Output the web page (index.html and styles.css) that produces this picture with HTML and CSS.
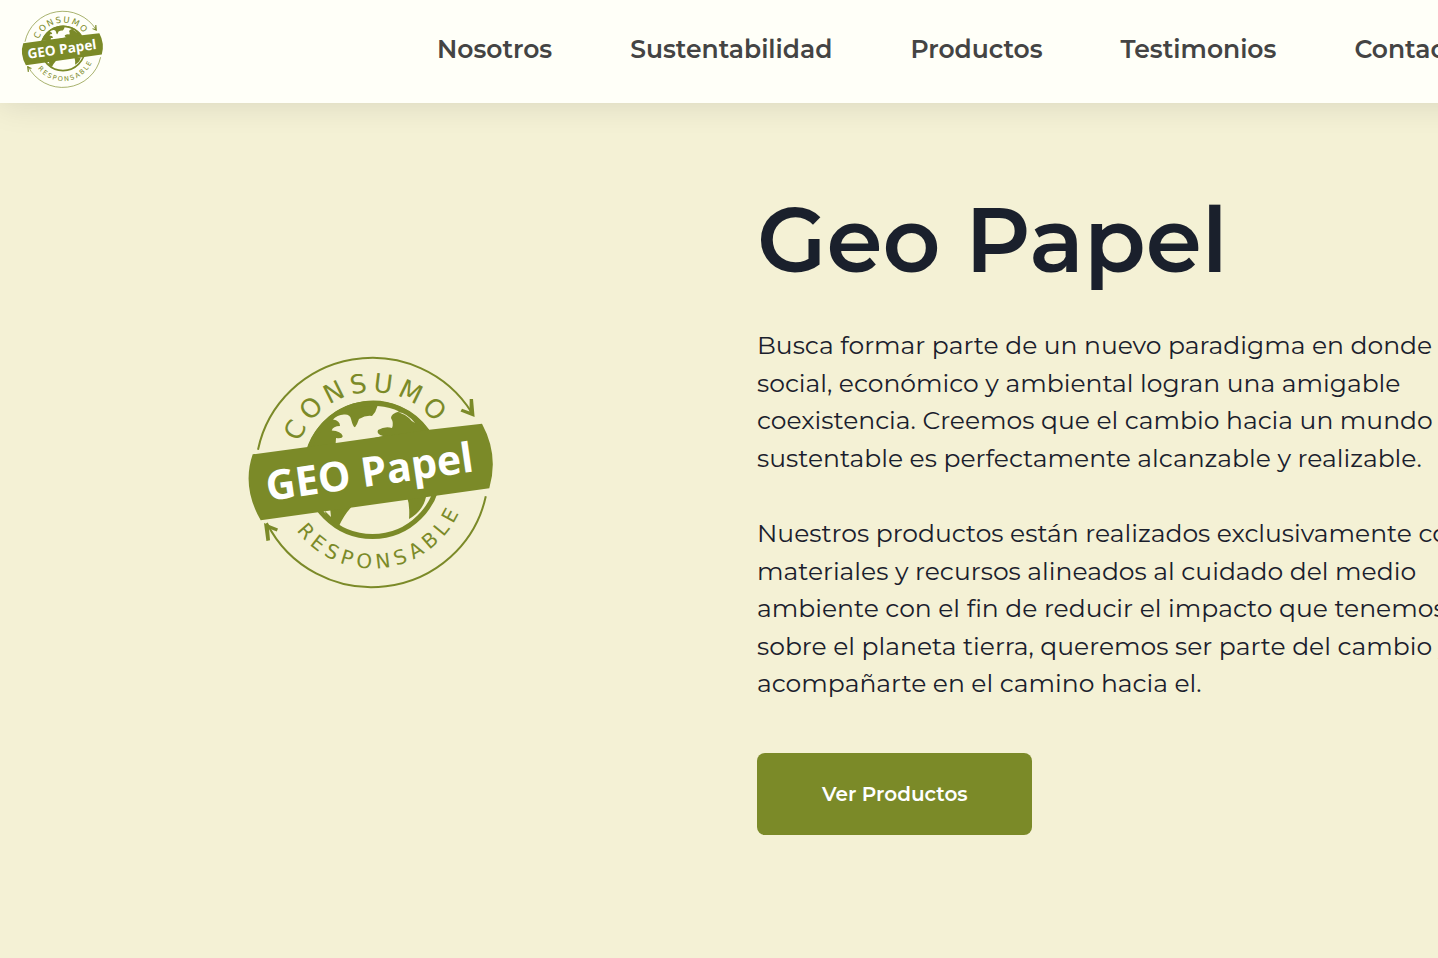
FILE: index.html
```html
<!DOCTYPE html>
<html lang="es">
<head>
<meta charset="utf-8">
<meta name="viewport" content="width=device-width, initial-scale=1">
<title>Geo Papel</title>
<link rel="stylesheet" href="styles.css">
</head>
<body>
<header class="header">
  <a class="brand" href="#inicio" aria-label="Geo Papel">
    <svg class="brand-logo" viewBox="0 0 244 232" aria-hidden="true"><use href="#logo"/></svg>
  </a>
  <nav class="nav">
    <a href="#nosotros">Nosotros</a>
    <a href="#sustentabilidad">Sustentabilidad</a>
    <a href="#productos">Productos</a>
    <a href="#testimonios">Testimonios</a>
    <a href="#contacto">Contacto</a>
  </nav>
</header>
<main class="hero" id="inicio">
  <div class="hero-art">
    <svg class="hero-logo" viewBox="0 0 244 232" role="img" aria-label="Geo Papel, consumo responsable">
      <defs>
        <path id="arc-top" d="M45 113.500A78.500 78.500 0 0 1 202 113.500"/>
        <path id="arc-bottom" d="M28.500 116.500A95 95 0 0 0 218.500 116.500"/>
        <clipPath id="globe-clip"><circle cx="123.5" cy="113" r="65"/></clipPath>
      </defs>
      <g id="logo">
        <g class="logo-line">
          <path d="M9 92.700A116.800 115.300 0 0 1 223 56"/>
          <path d="M236.800 139.300A116.800 115 0 0 1 17.800 166"/>
        </g>
        <g class="logo-fill">
          <path d="M211.500 54.500L213 51.800L220.500 54.500L220.700 42L224 42L225.600 60Z"/>
          <path d="M29 171.500L27.800 174.500L20 171.500L21 183.300L17.400 184L15 166Z"/>
          <path d="M58.700 90A69 69 0 0 1 180.300 72.700L150 90Z"/>
        </g>
        <circle class="logo-ring" cx="123.5" cy="113" r="66.5"/>
        <path class="logo-land" d="M86.700 86L87 81Q93.500 82 93.700 79Q92 74 82.700 73.500Q84 69 91 69Q91 63.500 84 62.500Q88 58 95 57.500Q101 57 102 62Q104 70 106 70.300Q108 68 110 62Q117 58 123 59Q127 55 128.500 49Q142 50 150 54.600Q142 57 142 61Q145 66 143 71Q136 69 129 73Q127 77 134 79L86 90Z"/>
        <path class="logo-land" d="M149 55Q158 56 166 66Q163 65 160 61Q155 57 149 55Z"/>
        <g class="logo-fill" clip-path="url(#globe-clip)">
          <path d="M81 150L82 160L76 154L78 168L90 169Q95 158 102 150.500L102 148Z"/>
          <path d="M158 140Q161 148 160 162Q174 154 177 140Z"/>
        </g>
        <path class="logo-fill" d="M3.700 97.300L58.700 90L180.300 72.700L233 66.700Q250 98 240.300 131.300L11.700 163.300Q-7.500 130 3.700 97.300Z"/>
        <text class="logo-name" x="19" y="144" transform="rotate(-8.200 19 144)">GEO Papel</text>
        <text class="logo-top" dx="0 5 5 5 5 5 5"><textPath href="#arc-top" startOffset="112">CONSUMO</textPath></text>
        <text class="logo-bottom" dx="0 5 5 5 5 5 5 5 5 5 5"><textPath href="#arc-bottom" startOffset="159">RESPONSABLE</textPath></text>
      </g>
    </svg>
  </div>
  <div class="hero-copy">
    <h1>Geo Papel</h1>
    <p>Busca formar parte de un nuevo paradigma en donde lo<br>
      social, económico y ambiental logran una amigable<br>
      coexistencia. Creemos que el cambio hacia un mundo<br>
      sustentable es perfectamente alcanzable y realizable.</p>
    <p>Nuestros productos están realizados exclusivamente con<br>
      materiales y recursos alineados al cuidado del medio<br>
      ambiente con el fin de reducir el impacto que tenemos<br>
      sobre el planeta tierra, queremos ser parte del cambio y<br>
      acompañarte en el camino hacia el.</p>
    <a class="button" href="#productos">Ver Productos</a>
  </div>
</main>
</body>
</html>
```
FILE: styles.css
```css
*, *::before, *::after {
  box-sizing: border-box;
}

body {
  --paper: #f4f1d5;
  margin: 0;
  min-height: 100vh;
  overflow-x: hidden;
  background: var(--paper);
  color: #1a202c;
  font-family: Montserrat, Inter, sans-serif;
}

a {
  color: inherit;
  text-decoration: none;
}

.header {
  --paper: #fffff8;
  position: relative;
  display: flex;
  align-items: center;
  gap: 334px;
  min-width: max-content;
  padding: 11px 22px 15px;
  background: var(--paper);
  box-shadow: 0 0 32px rgba(0, 0, 0, 0.12);
}

.brand,
.nav {
  flex: none;
}

.brand-logo {
  display: block;
  width: 81px;
  height: 77px;
  overflow: visible;
}

.nav {
  display: flex;
  gap: 78px;
  padding-bottom: 2px;
  color: #444;
  font-size: 25px;
  font-weight: 600;
  line-height: 32px;
}

.hero {
  display: grid;
  grid-template-columns: 742fr 696fr;
  align-items: center;
  padding: 8px 0 123px;
}

.hero-art {
  display: flex;
  justify-content: center;
}

.hero-logo {
  width: 244px;
  height: 232px;
  overflow: visible;
}

.hero-copy {
  min-width: 0;
  padding: 74px 0 0 15px;
  white-space: nowrap;
}

h1 {
  margin: 0 0 32px;
  font-size: 90px;
  font-weight: 600;
  line-height: 110px;
}

p {
  margin: 0 0 38px;
  font-size: 25px;
  font-weight: 400;
  line-height: 1.5;
}

.button {
  display: inline-block;
  margin-top: 12px;
  padding: 25px 64px 25px 65px;
  border-radius: 8px;
  background: #7b8a28;
  color: #fff;
  font-size: 20px;
  font-weight: 600;
  line-height: 32px;
}

.logo-line {
  fill: none;
  stroke: #7b8a28;
  stroke-width: 2;
}

.logo-ring {
  fill: none;
  stroke: #7b8a28;
  stroke-width: 5;
}

.logo-fill {
  fill: #7b8a28;
}

.logo-land {
  fill: var(--paper);
}

.logo-name {
  fill: #fff;
  font-family: "Open Sans", sans-serif;
  font-size: 41px;
  font-weight: 700;
}

.logo-top,
.logo-bottom {
  fill: #7b8a28;
  font-family: "DejaVu Sans", sans-serif;
  font-size: 26px;
  text-anchor: middle;
}

.logo-bottom {
  font-size: 20px;
}
```
